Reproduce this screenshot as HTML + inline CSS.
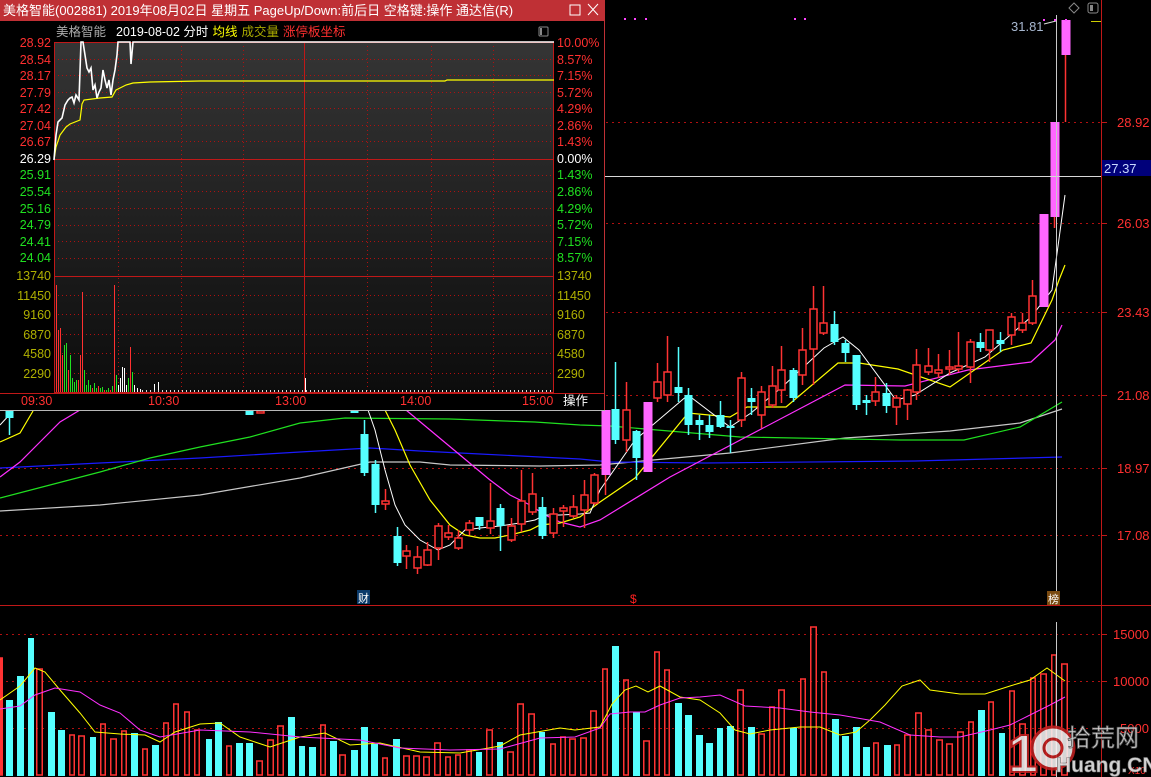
<!DOCTYPE html>
<html><head><meta charset="utf-8">
<style>
html,body{margin:0;padding:0;background:#000;width:1151px;height:777px;overflow:hidden;font-family:"Liberation Sans","Noto Sans CJK SC",sans-serif}
svg{position:absolute;left:0;top:0}
.t{font-family:"Liberation Sans","Noto Sans CJK SC",sans-serif}
</style></head><body>
<svg id="s" width="1151" height="777" xmlns="http://www.w3.org/2000/svg">
<rect width="1151" height="777" fill="#000"/>
<g id="grid" stroke="#b01010" stroke-dasharray="2,4" stroke-width="1">
<line x1="0" y1="122.5" x2="1101" y2="122.5"/><line x1="0" y1="223.5" x2="1101" y2="223.5"/>
<line x1="0" y1="312.5" x2="1101" y2="312.5"/><line x1="0" y1="395.5" x2="1101" y2="395.5"/>
<line x1="0" y1="468.5" x2="1101" y2="468.5"/><line x1="0" y1="535.5" x2="1101" y2="535.5"/>
<line x1="0" y1="634.5" x2="1101" y2="634.5"/><line x1="0" y1="681.5" x2="1101" y2="681.5"/><line x1="0" y1="728.5" x2="1101" y2="728.5"/>
</g>
<line x1="0" y1="605.5" x2="1151" y2="605.5" stroke="#c01818"/>
<line x1="1101.5" y1="0" x2="1101.5" y2="777" stroke="#c01818"/>
<g stroke="#c01818"><line x1="1101" y1="122.5" x2="1107" y2="122.5"/><line x1="1101" y1="223.5" x2="1107" y2="223.5"/><line x1="1101" y1="312.5" x2="1107" y2="312.5"/><line x1="1101" y1="395.5" x2="1107" y2="395.5"/><line x1="1101" y1="468.5" x2="1107" y2="468.5"/><line x1="1101" y1="535.5" x2="1107" y2="535.5"/><line x1="1101" y1="634.5" x2="1107" y2="634.5"/><line x1="1101" y1="681.5" x2="1107" y2="681.5"/></g>
<g id="ma" fill="none" stroke-width="1.2"></g>
<g id="cd"></g>
<g id="vol"></g>
<line x1="0" y1="176.5" x2="1101" y2="176.5" stroke="#d8d8d8"/>
<line x1="1056.5" y1="15" x2="1056.5" y2="600" stroke="#c8c8c8"/>
<line x1="1056.5" y1="622" x2="1056.5" y2="777" stroke="#c8c8c8"/>
<g class="t" font-size="13" fill="#ff3030">
<text x="1117" y="127">28.92</text><text x="1117" y="228">26.03</text><text x="1117" y="317">23.43</text>
<text x="1117" y="400">21.08</text><text x="1117" y="473">18.97</text><text x="1117" y="540">17.08</text>
<text x="1113" y="639">15000</text><text x="1113" y="686">10000</text><text x="1120" y="733">5000</text><text x="1128" y="774" font-size="10">X10</text>
</g>
<rect x="1102" y="160" width="49" height="16" fill="#00007a"/>
<text x="1104" y="173" class="t" font-size="13" fill="#c8d8ff">27.37</text>
<text x="1011" y="31" class="t" font-size="13" fill="#a8b8d0">31.81</text>
<line x1="1044" y1="24" x2="1056" y2="21" stroke="#ddd"/>
<g fill="#ff44ff"><rect x="624" y="18" width="2" height="2"/><rect x="634" y="18" width="2" height="2"/><rect x="645" y="18" width="2" height="2"/><rect x="794" y="18" width="2" height="2"/><rect x="804" y="18" width="2" height="2"/><rect x="1043" y="19" width="2" height="2"/><rect x="1054" y="19" width="2" height="2"/><rect x="1065" y="19" width="2" height="2"/></g>
<path d="M1074 3 L1079 8 L1074 13 L1069 8 Z" fill="none" stroke="#888"/>
<rect x="1088" y="3" width="10" height="10" rx="2" fill="none" stroke="#888"/><rect x="1090" y="5" width="3" height="6" fill="#888"/>
<rect x="1091" y="21" width="10" height="1" fill="#cccc00"/>
<rect x="357" y="590" width="13" height="14" fill="#0a3a6a"/><text x="358" y="602" font-size="11" fill="#fff" class="t">财</text>
<text x="630" y="603" font-size="12" fill="#ff2020" class="t">$</text>
<rect x="1047" y="591" width="13" height="14" fill="#7a4a10"/><text x="1048" y="603" font-size="11" fill="#fff" class="t">榜</text>

<!-- watermark -->
<g opacity="0.88">
<text x="1008" y="772" font-size="54" font-weight="bold" fill="#f4f4f4" stroke="#c02020" stroke-width="2" class="t">1</text>
<circle cx="1053" cy="748" r="21" fill="#f4f4f4" stroke="#c02020" stroke-width="3"/>
<circle cx="1053" cy="748" r="9" fill="none" stroke="#c02020" stroke-width="3"/>
<text x="1067" y="746" font-size="24" fill="#eee" stroke="#666" stroke-width="0.8" class="t">拾荒网</text>
<text x="1056" y="772" font-size="21" font-weight="bold" fill="#eee" stroke="#888" stroke-width="0.6" class="t">Huang.CN</text>
</g>

<!-- popup -->
<rect x="0" y="0" width="605" height="411" fill="#000"/>
<rect x="0" y="0" width="605" height="21" fill="#bf3035"/>
<text x="3" y="15" font-size="13" fill="#fff" class="t">美格智能(002881) 2019年08月02日 星期五 PageUp/Down:前后日 空格键:操作 通达信(R)</text>
<rect x="570" y="5" width="10" height="10" fill="none" stroke="#fff"/>
<path d="M588 4 L598 15 M598 4 L588 15" stroke="#fff"/>
<line x1="604.5" y1="21" x2="604.5" y2="411" stroke="#bf3035"/>
<line x1="0" y1="410.5" x2="605" y2="410.5" stroke="#b8b8b8"/>
<text x="56" y="36" font-size="12.5" class="t"><tspan fill="#aaa">美格智能</tspan><tspan dx="10" fill="#fff">2019-08-02 分时</tspan><tspan dx="4" fill="#ffff00">均线</tspan><tspan dx="4" fill="#aaaa00">成交量</tspan><tspan dx="4" fill="#ff3030">涨停板坐标</tspan></text>
<rect x="539" y="27" width="9" height="9" rx="1" fill="none" stroke="#888"/><rect x="540" y="28" width="2" height="7" fill="#888"/>
<defs><linearGradient id="g" x1="0" y1="0" x2="0" y2="1"><stop offset="0" stop-color="#353535"/><stop offset="1" stop-color="#0c0c0c"/></linearGradient></defs>
<rect x="54" y="42" width="500" height="351" fill="url(#g)"/>
<g stroke="#b01010" stroke-dasharray="1,3">
<line x1="118.5" y1="42" x2="118.5" y2="393"/><line x1="181.5" y1="42" x2="181.5" y2="393"/><line x1="243.5" y1="42" x2="243.5" y2="393"/><line x1="367.5" y1="42" x2="367.5" y2="393"/><line x1="431.5" y1="42" x2="431.5" y2="393"/><line x1="493.5" y1="42" x2="493.5" y2="393"/>
<line x1="54" y1="59.5" x2="554" y2="59.5"/><line x1="54" y1="75.5" x2="554" y2="75.5"/><line x1="54" y1="92.5" x2="554" y2="92.5"/><line x1="54" y1="108.5" x2="554" y2="108.5"/><line x1="54" y1="125.5" x2="554" y2="125.5"/><line x1="54" y1="141.5" x2="554" y2="141.5"/>
<line x1="54" y1="175.5" x2="554" y2="175.5"/><line x1="54" y1="191.5" x2="554" y2="191.5"/><line x1="54" y1="208.5" x2="554" y2="208.5"/><line x1="54" y1="225.5" x2="554" y2="225.5"/><line x1="54" y1="241.5" x2="554" y2="241.5"/><line x1="54" y1="258.5" x2="554" y2="258.5"/>
<line x1="54" y1="295.5" x2="554" y2="295.5"/><line x1="54" y1="314.5" x2="554" y2="314.5"/><line x1="54" y1="334.5" x2="554" y2="334.5"/><line x1="54" y1="353.5" x2="554" y2="353.5"/><line x1="54" y1="373.5" x2="554" y2="373.5"/>
</g>
<g stroke="#c01818" fill="none">
<rect x="54.5" y="42.5" width="499" height="350"/>
<line x1="304.5" y1="42" x2="304.5" y2="393"/>
<line x1="54" y1="159.5" x2="554" y2="159.5"/>
<line x1="54" y1="276.5" x2="554" y2="276.5"/>
<line x1="0" y1="393.5" x2="604" y2="393.5"/>
</g>
<g id="pv"></g>
<polyline fill="none" stroke="#ffff00" stroke-width="1.2" points="54,160 56,147 60,135 66,127 70,124 80,120 82,104 84,100 100,98 112,97 116,90 120,88 126,85 133,83 150,82 200,81 300,81 445,81 447,80 554,80"/>
<polyline fill="none" stroke="#fff" stroke-width="1.6" points="54,160 56,135 58,122 62,118 65,105 68,100 70,98 72,97 74,103 76,95 79,100 81,42 83,42 85,55 87,68 89,72 91,68 93,90 95,85 97,98 99,92 101,88 103,70 105,80 107,88 109,80 111,95 113,80 115,70 117,55 118,42 130,42 131,64 133,42 554,42"/>
<g class="t" font-size="12.5" text-anchor="end">
<g fill="#ff3030"><text x="51" y="47">28.92</text><text x="51" y="64">28.54</text><text x="51" y="80">28.17</text><text x="51" y="97">27.79</text><text x="51" y="113">27.42</text><text x="51" y="130">27.04</text><text x="51" y="146">26.67</text></g>
<text x="51" y="163" fill="#fff">26.29</text>
<g fill="#20e020"><text x="51" y="179">25.91</text><text x="51" y="196">25.54</text><text x="51" y="213">25.16</text><text x="51" y="229">24.79</text><text x="51" y="246">24.41</text><text x="51" y="262">24.04</text></g>
<g fill="#b0b000"><text x="51" y="280">13740</text><text x="51" y="300">11450</text><text x="51" y="319">9160</text><text x="51" y="339">6870</text><text x="51" y="358">4580</text><text x="51" y="378">2290</text></g>
</g>
<g class="t" font-size="12.5">
<g fill="#ff3030"><text x="557" y="47">10.00%</text><text x="557" y="64">8.57%</text><text x="557" y="80">7.15%</text><text x="557" y="97">5.72%</text><text x="557" y="113">4.29%</text><text x="557" y="130">2.86%</text><text x="557" y="146">1.43%</text></g>
<text x="557" y="163" fill="#fff">0.00%</text>
<g fill="#20e020"><text x="557" y="179">1.43%</text><text x="557" y="196">2.86%</text><text x="557" y="213">4.29%</text><text x="557" y="229">5.72%</text><text x="557" y="246">7.15%</text><text x="557" y="262">8.57%</text></g>
<g fill="#b0b000"><text x="557" y="280">13740</text><text x="557" y="300">11450</text><text x="557" y="319">9160</text><text x="557" y="339">6870</text><text x="557" y="358">4580</text><text x="557" y="378">2290</text></g>
<g fill="#ff3030"><text x="21" y="405">09:30</text><text x="148" y="405">10:30</text><text x="275" y="405">13:00</text><text x="400" y="405">14:00</text><text x="522" y="405">15:00</text></g>
<text x="563" y="405" fill="#fff">操作</text>
</g>
</svg>
<script>
var NS="http://www.w3.org/2000/svg";
function el(p,t,a){var e=document.createElementNS(NS,t);for(var k in a)e.setAttribute(k,a[k]);p.appendChild(e);return e;}
function toPath(s){return s.split(" M").map(function(seg){return "M"+seg.trim().split(" ").join(" L");}).join(" ");}
var ma=document.getElementById('ma');
var lines=[
["#c8c8c8","0,511 100,505 200,495 300,478 370,462 420,462 450,465 540,466 600,465 653,460 730,453 845,438 950,431 1020,423 1062,409"],
["#1a1aff","0,468 100,463 200,458 300,452 370,448 420,451 480,454 540,457 580,459 610,462 705,463 915,461 1062,457"],
["#20e020","0,498 50,485 100,472 150,458 200,447 250,437 300,423 345,418 450,419 505,421 535,422 580,425 610,426 740,437 900,440 964,440 1020,427 1062,402"],
["#ff30ff","0,477 20,462 40,442 60,422 80,410 M406,410 430,430 460,455 490,480 510,495 530,505 545,515 560,522 580,527 600,520 670,477 845,385 905,386 968,370 1031,362 1055,340 1062,325"],
["#ffff00","0,442 20,433 33,411 M385,410 395,430 410,465 430,500 450,525 465,535 480,538 495,538 510,535 530,530 540,525 560,523 580,517 600,502 635,478 688,413 730,417 747,407 786,407 838,363 859,363 898,369 950,387 1003,350 1031,343 1052,300 1059,280 1065,265"],
["#ffffff","0,425 12,412 M368,410 375,430 385,470 395,505 405,525 420,540 438,550 450,545 465,530 480,528 500,526 520,523 535,520 545,515 560,515 580,514 590,513 600,490 635,440 688,395 730,427 751,413 782,387 824,348 843,337 859,350 896,400 915,395 950,373 985,357 1031,317 1052,290 1065,195"]];
lines.forEach(function(l){el(ma,'path',{d:toPath(l[1]),stroke:l[0],'stroke-width':l[0]=="#ffffff"?1:1.2,fill:'none'});});
var cd=document.getElementById('cd');
var C=[[9,411,418,411,435,'c'],[249,411,415,411,415,'c'],[260,411,413,411,413,'r'],[354,411,413,411,413,'c'],[364,434,473,420,476,'c'],[375,464,505,460,513,'c'],[385,501,504,489,510,'r'],[397,536,563,527,566,'c'],[406,551,556,545,569,'r'],[417,557,568,546,574,'r'],[427,550,565,542,566,'r'],[438,526,548,523,560,'r'],[448,533,537,525,540,'r'],[458,538,548,530,550,'r'],[469,523,530,520,535,'r'],[479,517,526,517,530,'c'],[490,521,528,483,534,'r'],[500,508,526,504,551,'c'],[511,526,540,518,542,'r'],[521,501,524,470,532,'r'],[532,494,512,473,515,'r'],[542,507,536,497,539,'c'],[553,514,533,508,538,'r'],[563,508,511,505,527,'r'],[573,507,516,495,518,'r'],[584,495,510,480,528,'r'],[594,475,503,473,505,'r'],
[605,410,475,410,495,'m'],[615,409,440,362,444,'c'],[626,410,440,382,452,'r'],[636,431,458,430,480,'c'],[647,402,472,402,472,'m'],[657,382,398,363,402,'r'],[667,372,395,336,402,'r'],[678,387,393,347,402,'c'],[688,395,425,388,435,'c'],[699,420,425,415,440,'c'],[709,425,432,415,438,'c'],[720,415,427,401,428,'c'],[730,426,428,420,453,'c'],[741,378,420,372,427,'r'],[751,398,402,388,415,'c'],[761,392,415,386,428,'r'],[772,386,405,366,408,'r'],[781,370,390,346,403,'r'],[793,370,398,368,402,'c'],[802,350,375,328,385,'r'],[813,309,349,286,385,'r'],[823,323,333,286,335,'r'],[834,324,342,311,345,'c'],[845,343,353,340,362,'c'],[856,355,405,355,410,'c'],[866,400,403,395,415,'c'],[875,392,401,377,406,'r'],[886,393,406,383,413,'c'],[896,398,407,395,425,'r'],[907,390,404,389,420,'r'],[916,365,392,349,400,'r'],[928,366,372,348,375,'r'],[938,370,373,354,378,'r'],[949,367,369,350,375,'r'],[958,366,369,332,372,'r'],[970,342,367,339,383,'r'],[980,342,348,333,352,'c'],[989,330,350,330,362,'r'],[1000,340,344,332,352,'c'],[1011,317,335,313,345,'r'],[1022,323,330,313,333,'r'],[1032,296,323,280,325,'r'],[1043,214,307,214,307,'m'],[1054,122,217,122,228,'m'],[1065,20,55,20,122,'m']];
C.forEach(function(c){var x=c[0],col=c[5]=='r'?'#ff3333':(c[5]=='c'?'#55ffff':'#ff66ff');var wc=c[5]=='m'?'#ff3333':col;
 el(cd,'line',{x1:x+.5,x2:x+.5,y1:c[3],y2:c[4],stroke:wc,'stroke-width':1.5});
 var h=Math.max(c[2]-c[1],1.5);
 if(c[5]=='r'){el(cd,'rect',{x:x-3,y:c[1],width:7,height:h,fill:'#000',stroke:col,'stroke-width':1.5});}
 else el(cd,'rect',{x:x-3.5,y:c[1],width:c[5]=='m'?9:8,height:h,fill:col});});
var vol=document.getElementById('vol');
var V=[[0,3,658,'r'],[6,13,700,'c'],[17,24,676,'c'],[28,34,638,'c'],[36,43,669,'r'],[48,55,712,'c'],[58,65,730,'c'],[69,75,735,'r'],[78,85,736,'r'],[90,96,737,'c'],[100,106,724,'r'],[110,117,739,'r'],[121,127,731,'r'],[131,138,733,'c'],[142,148,749,'r'],[152,159,745,'c'],[163,169,723,'r'],[173,179,704,'r'],[184,190,712,'r'],[194,200,730,'r'],[206,212,739,'c'],[215,222,722,'c'],[226,232,746,'r'],[236,243,743,'c'],[246,253,743,'c'],[256,263,761,'r'],[267,274,740,'r'],[277,284,726,'r'],[288,295,717,'c'],[299,305,746,'c'],[309,316,747,'c'],[320,326,725,'r'],[330,337,741,'c'],[339,346,755,'r'],[351,358,750,'c'],[361,368,727,'c'],[371,378,744,'c'],[382,388,758,'r'],[393,400,739,'c'],[403,410,756,'r'],[413,420,756,'r'],[423,430,757,'r'],[434,441,743,'r'],[445,451,757,'r'],[455,461,755,'r'],[466,472,750,'r'],[476,482,752,'c'],[486,493,730,'r'],[497,503,742,'c'],[507,514,752,'r'],[517,524,704,'r'],[528,535,714,'r'],[539,545,732,'c'],[550,556,744,'r'],[560,566,737,'r'],[569,576,739,'r'],[580,587,738,'r'],[590,597,711,'r'],
[602,608,669,'r'],[612,619,646,'c'],[623,629,680,'r'],[633,640,712,'c'],[643,650,741,'r'],[654,660,652,'r'],[664,670,670,'r'],[675,682,703,'c'],[685,692,715,'c'],[696,703,735,'c'],[706,713,743,'c'],[717,723,728,'c'],[727,734,726,'c'],[737,744,690,'r'],[748,755,727,'c'],[758,765,734,'r'],[769,775,707,'r'],[778,785,690,'r'],[790,797,728,'c'],[800,806,679,'r'],[810,817,627,'r'],[821,827,672,'r'],[832,839,719,'c'],[842,849,736,'c'],[853,860,727,'c'],[863,870,747,'c'],[873,879,743,'r'],[884,891,745,'c'],[894,900,745,'r'],[904,911,735,'r'],[915,922,713,'r'],[925,932,730,'r'],[936,943,740,'r'],[946,953,744,'r'],[957,964,732,'r'],[968,974,722,'r'],[978,985,710,'c'],[988,994,702,'r'],[999,1005,733,'c'],[1009,1015,691,'r'],[1019,1026,724,'r'],[1030,1036,678,'r'],[1040,1047,674,'r'],[1051,1057,655,'r'],[1061,1068,664,'r']];
V.forEach(function(v){var w=v[1]-v[0];if(v[3]=='c')el(vol,'rect',{x:v[0],y:v[2],width:w,height:776-v[2],fill:'#55ffff'});
 else el(vol,'rect',{x:v[0]+.75,y:v[2],width:w-1.5,height:775-v[2],fill:'none',stroke:'#ff3333','stroke-width':1.5});});
el(vol,'polyline',{fill:'none',stroke:'#ffff00','stroke-width':1,points:"0,700 20,686 35,668 45,672 60,690 80,713 95,732 120,734 145,735 160,742 175,732 200,724 220,723 240,737 270,747 300,737 325,733 350,745 380,743 420,752 460,753 500,746 520,735 560,728 575,730 600,727 612,704 625,690 636,686 648,692 660,686 680,697 700,700 720,713 735,730 750,734 770,730 800,727 820,727 840,735 856,732 870,720 885,705 902,686 920,680 930,690 960,694 985,694 1010,686 1030,680 1047,668 1065,681"});
el(vol,'polyline',{fill:'none',stroke:'#ff30ff','stroke-width':1,points:"0,709 20,706 35,695 55,688 80,692 100,705 120,713 140,730 160,737 200,730 250,732 300,737 360,740 400,748 450,750 500,749 540,738 575,737 600,728 610,714 630,712 645,712 660,705 680,698 700,697 720,695 745,706 780,708 810,712 840,715 880,722 910,735 940,737 960,737 990,730 1010,725 1030,715 1050,705 1065,697"});
var pv=document.getElementById('pv');
var P=[[56,285,'r'],[58,330,'r'],[60,328,'r'],[62,355,'r'],[64,345,'g'],[66,343,'g'],[68,370,'r'],[70,355,'g'],[72,378,'g'],[74,382,'g'],[76,380,'g'],[78,380,'r'],[80,355,'r'],[82,292,'r'],[84,370,'g'],[86,385,'g'],[88,380,'g'],[90,385,'g'],[92,388,'r'],[94,383,'g'],[96,388,'g'],[98,386,'r'],[100,388,'g'],[102,387,'g'],[104,390,'r'],[106,390,'g'],[108,388,'g'],[110,390,'r'],[112,386,'g'],[114,285,'r'],[116,375,'g'],[118,385,'w'],[120,378,'w'],[122,367,'w'],[124,368,'w'],[126,385,'w'],[128,378,'g'],[130,347,'r'],[132,372,'g'],[134,385,'w'],[137,388,'w'],[140,389,'w'],[154,384,'w'],[158,382,'w'],[305,378,'w']];
P.forEach(function(p){el(pv,'rect',{x:p[0],y:p[1],width:1,height:392-p[1],fill:p[2]=='r'?'#ff3030':(p[2]=='g'?'#20e020':'#fff')});});
for(var x=142;x<552;x+=4){el(pv,'rect',{x:x,y:390,width:1,height:2,fill:'#ddd'});}
</script>
</body></html>
